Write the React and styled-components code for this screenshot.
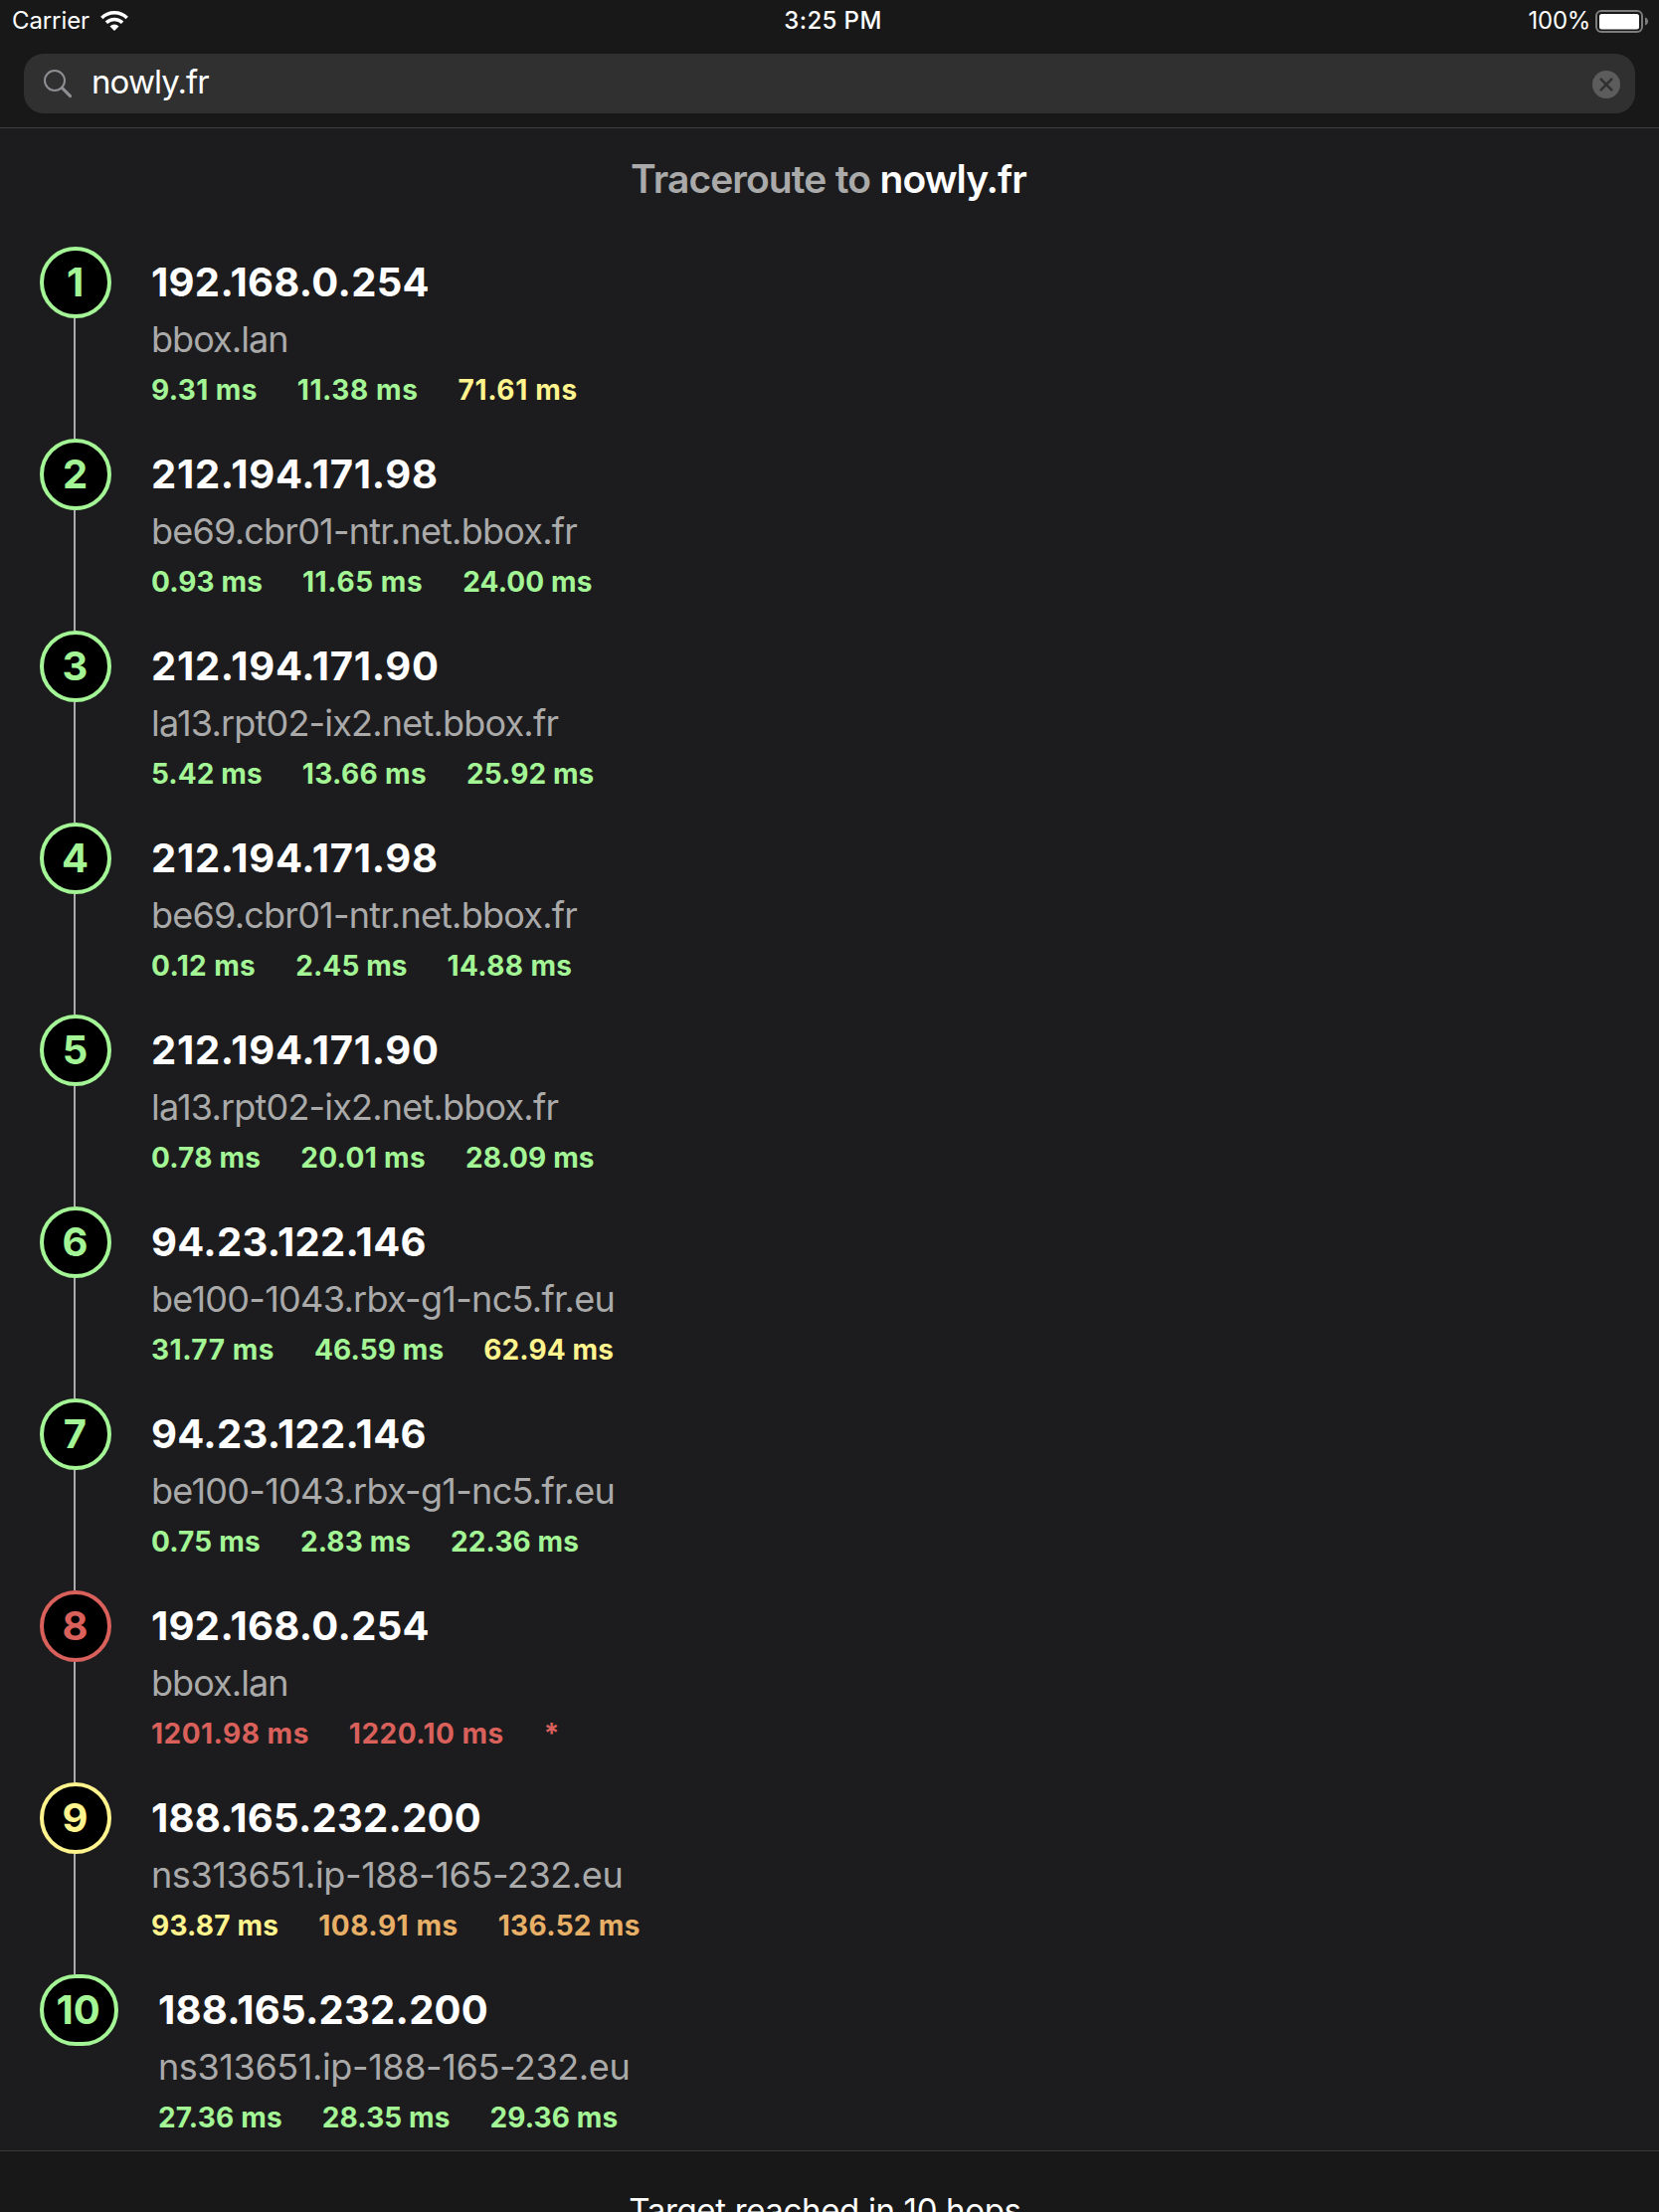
import React from "react";
import styled, { createGlobalStyle } from "styled-components";

const GlobalStyle = createGlobalStyle`
  *, *::before, *::after { box-sizing: border-box; }
  body {
    margin: 0;
    background: #1c1c1e;
    font-family: Inter, "Liberation Sans", sans-serif;
    -webkit-font-smoothing: antialiased;
  }
`;

const COLORS = {
  good: "#a3f595",
  fair: "#fff48d",
  slow: "#e8b066",
  bad: "#d9605b",
};

/* "1" is narrow and "7" is kerned tightly in Inter, so those strings get more tracking. */
const count = (text, digit) => text.split(digit).length - 1;
const tracking = (text, base, perOne, perSeven = 0) =>
  base + (perOne * count(text, "1") + perSeven * count(text, "7")) / text.length;

const Screen = styled.div`
  width: 1668px;
  height: 2224px;
  overflow: hidden;
  display: flex;
  flex-direction: column;
  background: #1c1c1e;
  color: #fff;
`;

const Header = styled.header`
  height: 129px;
  flex: none;
  background: #181818;
  border-bottom: 1px solid #3f3f41;
`;

const StatusBar = styled.div`
  display: grid;
  grid-template-columns: 1fr auto 1fr;
  height: 40px;
  padding: 0 11px 0 12px;
  font-size: 24px;
  line-height: 40px;
`;

const StatusLeft = styled.div`
  display: flex;
  align-items: center;
  gap: 11px;
`;

const StatusRight = styled.div`
  display: flex;
  align-items: center;
  justify-content: flex-end;
  gap: 4px;
`;

const StatusText = styled.span`
  padding-top: 1px;
  letter-spacing: ${(p) => p.$track || 0}px;
`;

const Clock = styled.div`
  font-weight: 500;
  letter-spacing: 0.4px;
  padding: 1px 0 0 6px;
`;

const SearchField = styled.div`
  display: flex;
  align-items: center;
  height: 60px;
  margin: 14px 24px 0;
  padding: 0 15px 0 18px;
  border-radius: 20px;
  background: #303030;
`;

const Query = styled.div`
  flex: 1;
  padding: 0 0 4px 18px;
  font-size: 33px;
  line-height: 40px;
  letter-spacing: -0.9px;
`;

const Title = styled.h1`
  margin: 26px 0 43px;
  padding-right: 2px;
  text-align: center;
  font-size: 39px;
  line-height: 50px;
  font-weight: 600;
  letter-spacing: -0.92px;
  word-spacing: 0.5px;
  color: #aaa;
`;

const TitleHost = styled.span`
  color: #fff;
`;

const HopList = styled.ol`
  list-style: none;
  margin: 0;
  padding: 0 0 0 40px;
  height: 1914px;
  flex: none;
`;

const Hop = styled.li`
  display: flex;
  gap: 40px;
  height: 193px;
`;

const Rail = styled.div`
  display: flex;
  flex-direction: column;
`;

const Badge = styled.div`
  display: flex;
  align-items: center;
  justify-content: center;
  width: ${(p) => (p.$wide ? "79px" : "72px")};
  height: 72px;
  padding-right: ${(p) => (p.$wide ? "2px" : "1px")};
  border: 4px solid ${(p) => COLORS[p.$level]};
  border-radius: 36px;
  background: #000;
  color: ${(p) => COLORS[p.$level]};
  font-size: 40px;
  line-height: 64px;
  font-weight: 700;
`;

const Connector = styled.div`
  flex: 1;
  width: 2px;
  margin-left: 34px;
  background: #aaa;
`;

const HopBody = styled.div`
  padding-top: 12px;
  white-space: nowrap;
`;

const Address = styled.div`
  font-size: 40px;
  line-height: 48px;
  font-weight: 700;
  letter-spacing: ${(p) => p.$track}px;
`;

const HostName = styled.div`
  margin-top: 11px;
  font-size: 36px;
  line-height: 44px;
  font-weight: 400;
  letter-spacing: ${(p) => p.$track}px;
  color: #aaa;
`;

const Times = styled.div`
  display: flex;
  gap: 40px;
  margin-top: 11px;
`;

const Time = styled.span`
  font-size: 28px;
  line-height: 36px;
  font-weight: 700;
  letter-spacing: ${(p) => p.$track}px;
  color: ${(p) => COLORS[p.$level]};
`;

const Footer = styled.footer`
  flex: none;
  height: 80px;
  padding-top: 39px;
  border-top: 1px solid #3a3a3a;
  background: #181818;
  text-align: center;
  font-size: 33px;
  line-height: 40px;
  letter-spacing: -0.35px;
`;

const HOSTS = {
  bbox: ["bbox.lan", -0.95],
  be69: ["be69.cbr01-ntr.net.bbox.fr", -0.77],
  la13: ["la13.rpt02-ix2.net.bbox.fr", -0.8],
  be100: ["be100-1043.rbx-g1-nc5.fr.eu", -0.71],
  ns: ["ns313651.ip-188-165-232.eu", -0.4],
};

const HOPS = [
  { ip: "192.168.0.254", host: "bbox", level: "good", times: [["9.31 ms", "good"], ["11.38 ms", "good"], ["71.61 ms", "fair"]] },
  { ip: "212.194.171.98", host: "be69", level: "good", times: [["0.93 ms", "good"], ["11.65 ms", "good"], ["24.00 ms", "good"]] },
  { ip: "212.194.171.90", host: "la13", level: "good", times: [["5.42 ms", "good"], ["13.66 ms", "good"], ["25.92 ms", "good"]] },
  { ip: "212.194.171.98", host: "be69", level: "good", times: [["0.12 ms", "good"], ["2.45 ms", "good"], ["14.88 ms", "good"]] },
  { ip: "212.194.171.90", host: "la13", level: "good", times: [["0.78 ms", "good"], ["20.01 ms", "good"], ["28.09 ms", "good"]] },
  { ip: "94.23.122.146", host: "be100", level: "good", times: [["31.77 ms", "good"], ["46.59 ms", "good"], ["62.94 ms", "fair"]] },
  { ip: "94.23.122.146", host: "be100", level: "good", times: [["0.75 ms", "good"], ["2.83 ms", "good"], ["22.36 ms", "good"]] },
  { ip: "192.168.0.254", host: "bbox", level: "bad", times: [["1201.98 ms", "bad"], ["1220.10 ms", "bad"], ["*", "bad"]] },
  { ip: "188.165.232.200", host: "ns", level: "fair", times: [["93.87 ms", "fair"], ["108.91 ms", "slow"], ["136.52 ms", "slow"]] },
  { ip: "188.165.232.200", host: "ns", level: "good", times: [["27.36 ms", "good"], ["28.35 ms", "good"], ["29.36 ms", "good"]] },
];

const WifiIcon = () => (
  <svg width="28" height="20" viewBox="0 0 28 20" fill="none">
    <path d="M1.3 6.9A18.3 18.3 0 0 1 26.7 6.9" stroke="#fff" strokeWidth="3.5" />
    <path d="M5.9 11.7A11.6 11.6 0 0 1 22.1 11.7" stroke="#fff" strokeWidth="3.5" />
    <path d="M14 20L9.5 15.4A6.3 6.3 0 0 1 18.5 15.4Z" fill="#fff" />
  </svg>
);

const BatteryIcon = () => (
  <svg width="54" height="24" viewBox="0 0 54 24" fill="none">
    <rect x="2" y="2" width="46" height="21" rx="5" stroke="#7d7d7d" strokeWidth="2" />
    <rect x="5" y="5" width="40" height="15.5" rx="2.5" fill="#fff" />
    <path d="M51 8.6C53 9.2 54 10.6 54 12.5S53 15.8 51 16.4Z" fill="#7d7d7d" />
  </svg>
);

const SearchIcon = () => (
  <svg width="32" height="32" viewBox="0 0 32 32" fill="none" stroke="#8e8e93">
    <circle cx="13" cy="13" r="10" strokeWidth="2" />
    <path d="M20.4 20.4L28.6 28.6" strokeWidth="3" strokeLinecap="round" />
  </svg>
);

const ClearIcon = () => (
  <svg width="28" height="30" viewBox="0 0 28 30" fill="none">
    <circle cx="14" cy="16" r="14" fill="#5c5c5c" />
    <path d="M8.7 10.7L19.3 21.3M19.3 10.7L8.7 21.3" stroke="#303030" strokeWidth="2.6" strokeLinecap="round" />
  </svg>
);

function HopRow({ hop, number, last }) {
  const [host, hostTrack] = HOSTS[hop.host];
  return (
    <Hop>
      <Rail>
        <Badge $level={hop.level} $wide={number > 9}>{number}</Badge>
        {!last && <Connector />}
      </Rail>
      <HopBody>
        <Address $track={tracking(hop.ip, -0.14, 3)}>{hop.ip}</Address>
        <HostName $track={hostTrack}>{host}</HostName>
        <Times>
          {hop.times.map(([text, level]) => (
            <Time key={text} $level={level} $track={tracking(text, 0.11, 1.9, 0.7)}>
              {text}
            </Time>
          ))}
        </Times>
      </HopBody>
    </Hop>
  );
}

export default function App() {
  return (
    <>
      <GlobalStyle />
      <Screen>
        <Header>
          <StatusBar>
            <StatusLeft>
              <StatusText $track={-0.1}>Carrier</StatusText>
              <WifiIcon />
            </StatusLeft>
            <Clock>3:25 PM</Clock>
            <StatusRight>
              <StatusText $track={-0.3}>100%</StatusText>
              <BatteryIcon />
            </StatusRight>
          </StatusBar>
          <SearchField>
            <SearchIcon />
            <Query>nowly.fr</Query>
            <ClearIcon />
          </SearchField>
        </Header>
        <Title>
          Traceroute to <TitleHost>nowly.fr</TitleHost>
        </Title>
        <HopList>
          {HOPS.map((hop, i) => (
            <HopRow key={i} hop={hop} number={i + 1} last={i === HOPS.length - 1} />
          ))}
        </HopList>
        <Footer>Target reached in 10 hops.</Footer>
      </Screen>
    </>
  );
}
